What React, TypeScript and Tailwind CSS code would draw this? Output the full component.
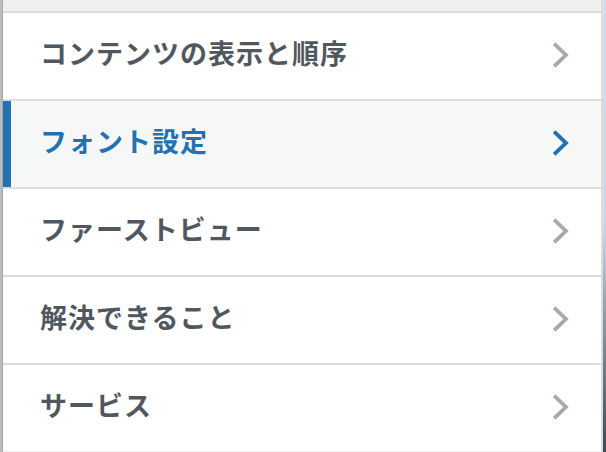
import React from 'react';

interface Section {
  id: string;
  title: string;
  active?: boolean;
}

const sections: Section[] = [
  { id: 'contents', title: 'コンテンツの表示と順序' },
  { id: 'fonts', title: 'フォント設定', active: true },
  { id: 'firstview', title: 'ファーストビュー' },
  { id: 'solutions', title: '解決できること' },
  { id: 'services', title: 'サービス' },
];

const Chevron: React.FC<{ active?: boolean }> = ({ active }) => (
  <svg width="18" height="26" viewBox="0 0 18 26" fill="none" className={active ? 'text-[#2271b1]' : 'text-[#a7aaad]'}>
    <polyline points="3.5,3 14,13 3.5,23" stroke="currentColor" strokeWidth={3.8} strokeLinecap="square" strokeLinejoin="miter" />
  </svg>
);

const App: React.FC = () => {
  return (
    <div
      className="flex w-[606px] h-[452px] overflow-hidden bg-[#f0f0f1]"
      style={{ fontFamily: '"Noto Sans CJK JP", "Noto Sans", sans-serif' }}
    >
      <div className="w-[3px] shrink-0 bg-[#bcbcbc] border-r border-[#a9a9a9]" />

      <div className="flex-1 flex flex-col border-r-2 border-[#dcdcde]">
        <div className="h-[11px] shrink-0 bg-[#f0f0f1]" />
        <ul className="flex flex-col">
          {sections.map((s) => (
            <li
              key={s.id}
              className={`relative h-[88px] flex items-center justify-between border-t-2 border-[#dcdcde] pl-[37px] pr-[31px] pb-[2px] ${
                s.active ? 'bg-[#f6f7f7]' : 'bg-white'
              }`}
            >
              {s.active && <span className="absolute left-0 top-0 bottom-0 w-[8px] bg-[#2271b1]" />}
              <span
                className={`text-[27px] font-bold leading-none tracking-[1px] pb-[5px] ${
                  s.active ? 'text-[#2271b1]' : 'text-[#50575e]'
                }`}
              >
                {s.title}
              </span>
              <Chevron active={s.active} />
            </li>
          ))}
        </ul>
      </div>

      <div className="w-[3px] shrink-0 bg-gradient-to-b from-[#cfdfeb] via-[#c9d9e6] to-[#3f4a52]" />
    </div>
  );
};

export default App;
